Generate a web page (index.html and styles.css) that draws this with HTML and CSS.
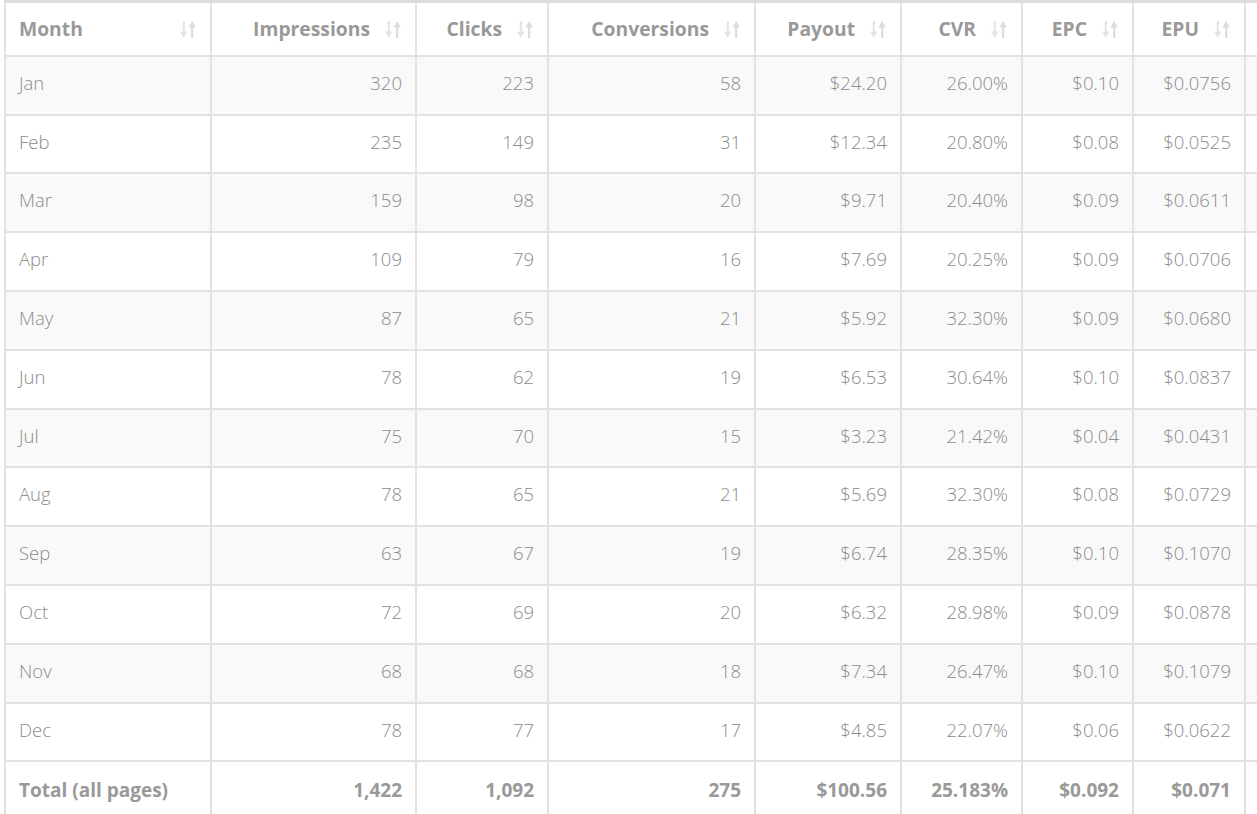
FILE: index.html
```html
<!DOCTYPE html>
<html>
<head>
<meta charset="utf-8">
<link rel="stylesheet" href="styles.css">
</head>
<body>
<div class="wrap">
<table class="report">
  <colgroup>
    <col class="c-month"><col class="c-imp"><col class="c-clk"><col class="c-conv"><col class="c-pay"><col class="c-cvr"><col class="c-epc"><col class="c-epu"><col class="c-extra">
  </colgroup>
  <thead>
    <tr>
      <th class="first"><div class="hd hd-split"><span>Month</span><svg class="sort" viewBox="0 0 16 18" width="17" height="19"><path class="dn" d="M2.5 1h2v10h2.5l-3.5 6l-3.5-6h2.5z"/><path class="up" d="M11.5 1l3.5 6h-2.5v10h-2v-10h-2.5z"/></svg></div></th>
      <th><div class="hd"><span>Impressions</span><svg class="sort" viewBox="0 0 16 18" width="17" height="19"><path class="dn" d="M2.5 1h2v10h2.5l-3.5 6l-3.5-6h2.5z"/><path class="up" d="M11.5 1l3.5 6h-2.5v10h-2v-10h-2.5z"/></svg></div></th>
      <th><div class="hd"><span>Clicks</span><svg class="sort" viewBox="0 0 16 18" width="17" height="19"><path class="dn" d="M2.5 1h2v10h2.5l-3.5 6l-3.5-6h2.5z"/><path class="up" d="M11.5 1l3.5 6h-2.5v10h-2v-10h-2.5z"/></svg></div></th>
      <th><div class="hd"><span>Conversions</span><svg class="sort" viewBox="0 0 16 18" width="17" height="19"><path class="dn" d="M2.5 1h2v10h2.5l-3.5 6l-3.5-6h2.5z"/><path class="up" d="M11.5 1l3.5 6h-2.5v10h-2v-10h-2.5z"/></svg></div></th>
      <th><div class="hd"><span>Payout</span><svg class="sort" viewBox="0 0 16 18" width="17" height="19"><path class="dn" d="M2.5 1h2v10h2.5l-3.5 6l-3.5-6h2.5z"/><path class="up" d="M11.5 1l3.5 6h-2.5v10h-2v-10h-2.5z"/></svg></div></th>
      <th><div class="hd"><span>CVR</span><svg class="sort" viewBox="0 0 16 18" width="17" height="19"><path class="dn" d="M2.5 1h2v10h2.5l-3.5 6l-3.5-6h2.5z"/><path class="up" d="M11.5 1l3.5 6h-2.5v10h-2v-10h-2.5z"/></svg></div></th>
      <th><div class="hd"><span>EPC</span><svg class="sort" viewBox="0 0 16 18" width="17" height="19"><path class="dn" d="M2.5 1h2v10h2.5l-3.5 6l-3.5-6h2.5z"/><path class="up" d="M11.5 1l3.5 6h-2.5v10h-2v-10h-2.5z"/></svg></div></th>
      <th><div class="hd"><span>EPU</span><svg class="sort" viewBox="0 0 16 18" width="17" height="19"><path class="dn" d="M2.5 1h2v10h2.5l-3.5 6l-3.5-6h2.5z"/><path class="up" d="M11.5 1l3.5 6h-2.5v10h-2v-10h-2.5z"/></svg></div></th>
      <th></th>
    </tr>
  </thead>
  <tbody>
    <tr><td class="first">Jan</td><td>320</td><td>223</td><td>58</td><td>$24.20</td><td>26.00%</td><td>$0.10</td><td>$0.0756</td><td></td></tr>
    <tr><td class="first">Feb</td><td>235</td><td>149</td><td>31</td><td>$12.34</td><td>20.80%</td><td>$0.08</td><td>$0.0525</td><td></td></tr>
    <tr><td class="first">Mar</td><td>159</td><td>98</td><td>20</td><td>$9.71</td><td>20.40%</td><td>$0.09</td><td>$0.0611</td><td></td></tr>
    <tr><td class="first">Apr</td><td>109</td><td>79</td><td>16</td><td>$7.69</td><td>20.25%</td><td>$0.09</td><td>$0.0706</td><td></td></tr>
    <tr><td class="first">May</td><td>87</td><td>65</td><td>21</td><td>$5.92</td><td>32.30%</td><td>$0.09</td><td>$0.0680</td><td></td></tr>
    <tr><td class="first">Jun</td><td>78</td><td>62</td><td>19</td><td>$6.53</td><td>30.64%</td><td>$0.10</td><td>$0.0837</td><td></td></tr>
    <tr><td class="first">Jul</td><td>75</td><td>70</td><td>15</td><td>$3.23</td><td>21.42%</td><td>$0.04</td><td>$0.0431</td><td></td></tr>
    <tr><td class="first">Aug</td><td>78</td><td>65</td><td>21</td><td>$5.69</td><td>32.30%</td><td>$0.08</td><td>$0.0729</td><td></td></tr>
    <tr><td class="first">Sep</td><td>63</td><td>67</td><td>19</td><td>$6.74</td><td>28.35%</td><td>$0.10</td><td>$0.1070</td><td></td></tr>
    <tr><td class="first">Oct</td><td>72</td><td>69</td><td>20</td><td>$6.32</td><td>28.98%</td><td>$0.09</td><td>$0.0878</td><td></td></tr>
    <tr><td class="first">Nov</td><td>68</td><td>68</td><td>18</td><td>$7.34</td><td>26.47%</td><td>$0.10</td><td>$0.1079</td><td></td></tr>
    <tr><td class="first">Dec</td><td>78</td><td>77</td><td>17</td><td>$4.85</td><td>22.07%</td><td>$0.06</td><td>$0.0622</td><td></td></tr>
  </tbody>
  <tfoot>
    <tr><td class="first">Total (all pages)</td><td>1,422</td><td>1,092</td><td>275</td><td>$100.56</td><td>25.183%</td><td>$0.092</td><td>$0.071</td><td></td></tr>
  </tfoot>
</table>
</div>
</body>
</html>
```

FILE: styles.css
```css
html, body {
  margin: 0;
  padding: 0;
  background: #ffffff;
  overflow: hidden;
}

.wrap {
  padding-left: 4px;
  width: 1400px;
}

.report {
  border-collapse: collapse;
  table-layout: fixed;
  width: 1346px;
  font-family: "Open Sans", "Liberation Sans", sans-serif;
  font-size: 18.5px;
  line-height: 26.8px;
  color: #8c8c8c;
  border-top: 3px solid #dcdcdc;
}

.c-month { width: 206px; }
.c-imp { width: 205px; }
.c-clk { width: 132px; }
.c-conv { width: 207px; }
.c-pay { width: 146px; }
.c-cvr { width: 121px; }
.c-epc { width: 111px; }
.c-epu { width: 112px; }
.c-extra { width: 106px; }

.report th,
.report td {
  border: 2px solid #e2e2e2;
  padding: 13px 13px 17px 13px;
  text-align: right;
  white-space: nowrap;
  overflow: hidden;
}

.report th {
  font-weight: 700;
  font-size: 19.3px;
  color: #999999;
  padding-top: 13px;
  padding-bottom: 12px;
}

.report td {
  font-weight: 300;
}

.report .first {
  text-align: left;
}

.hd {
  display: flex;
  align-items: center;
  justify-content: flex-end;
  gap: 15px;
}

.hd-split {
  justify-content: space-between;
}

.sort {
  display: block;
  flex: none;
}

.sort .dn { fill: #e4e4e4; }
.sort .up { fill: #dcdcdc; }

.report tbody tr:nth-child(odd) td {
  background: #f9f9f9;
}

.report tfoot td {
  font-weight: 700;
  font-size: 19px;
  color: #999999;
  padding-top: 15px;
  padding-bottom: 15px;
}
```
